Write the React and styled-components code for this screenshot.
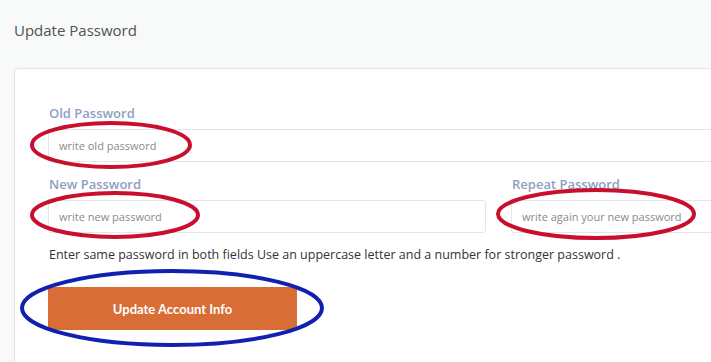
import React from 'react'
import styled, { createGlobalStyle } from 'styled-components'

const GlobalStyle = createGlobalStyle`
  html, body {
    margin: 0;
    padding: 0;
    background: #f8f9f9;
    overflow: hidden;
    font-family: "Open Sans", "Liberation Sans", sans-serif;
  }
`

const Page = styled.div`
  padding: 20px 0 0 14px;
  width: 1000px;
`

const Title = styled.h2`
  margin: 0;
  font-size: 15px;
  line-height: 20px;
  font-weight: 400;
  color: #4f5257;
`

const Card = styled.div`
  margin-top: 28px;
  width: 960px;
  background: #fff;
  border: 1px solid #e2e4e4;
  border-radius: 5px;
  padding: 35px 33px 40px;
  box-sizing: border-box;
`

const Row = styled.div`
  display: grid;
  grid-template-columns: 438px 438px;
  column-gap: 25px;
  margin-top: 13px;
`

const Field = styled.div`
  position: relative;
`

const Label = styled.label`
  display: block;
  font-size: 13px;
  line-height: 18px;
  font-weight: 600;
  color: #8d9ec3;
  margin-bottom: 7px;
  padding-left: 1px;
`

const Input = styled.input`
  display: block;
  width: 100%;
  height: 33px;
  box-sizing: border-box;
  border: 1px solid #e3e5e6;
  border-radius: 3px;
  padding: 0 10px;
  font-family: "Open Sans", "Liberation Sans", sans-serif;
  font-size: 11px;
  color: #444;
  outline: none;
  &::placeholder {
    color: #8a8a8a;
  }
`

const Help = styled.p`
  margin: 13px 0 0 1px;
  font-size: 12.5px;
  line-height: 18px;
  color: #333;
`

const ButtonWrap = styled.div`
  position: relative;
  margin-top: 23px;
  width: 249px;
`

const Button = styled.button`
  display: block;
  width: 249px;
  height: 43px;
  border: none;
  background: #d86e35;
  color: #fff;
  font-family: Lato, "Open Sans", sans-serif;
  font-weight: 700;
  font-size: 13px;
  cursor: pointer;
`

const Mark = styled.svg`
  position: absolute;
  pointer-events: none;
  overflow: visible;
`

// hand-drawn looking ring over a field
const Ring = ({ left, top, rx, ry, color }) => (
  <Mark
    width={rx * 2}
    height={ry * 2}
    style={{ left: left - rx, top: top - ry }}
  >
    <ellipse cx={rx} cy={ry} rx={rx - 2} ry={ry - 2} fill="none" stroke={color} strokeWidth="4" />
  </Mark>
)

export default function App() {
  return (
    <>
      <GlobalStyle />
      <Page>
        <Title>Update Password</Title>
        <Card>
          <Field>
            <Label>Old Password</Label>
            <Input type="password" placeholder="write old password" />
            <Ring left={63} top={41} rx={81} ry={24} color="#c8102e" />
          </Field>
          <Row>
            <Field>
              <Label>New Password</Label>
              <Input type="password" placeholder="write new password" />
              <Ring left={67} top={40} rx={85} ry={24} color="#c8102e" />
            </Field>
            <Field>
              <Label>Repeat Password</Label>
              <Input type="password" placeholder="write again your new password" />
              <Ring left={85} top={39} rx={100} ry={26} color="#c8102e" />
            </Field>
          </Row>
          <Help>Enter same password in both fields Use an uppercase letter and a number for stronger password .</Help>
          <ButtonWrap>
            <Button>Update Account Info</Button>
            <Ring left={124} top={21} rx={152} ry={39} color="#1020b0" />
          </ButtonWrap>
        </Card>
      </Page>
    </>
  )
}
